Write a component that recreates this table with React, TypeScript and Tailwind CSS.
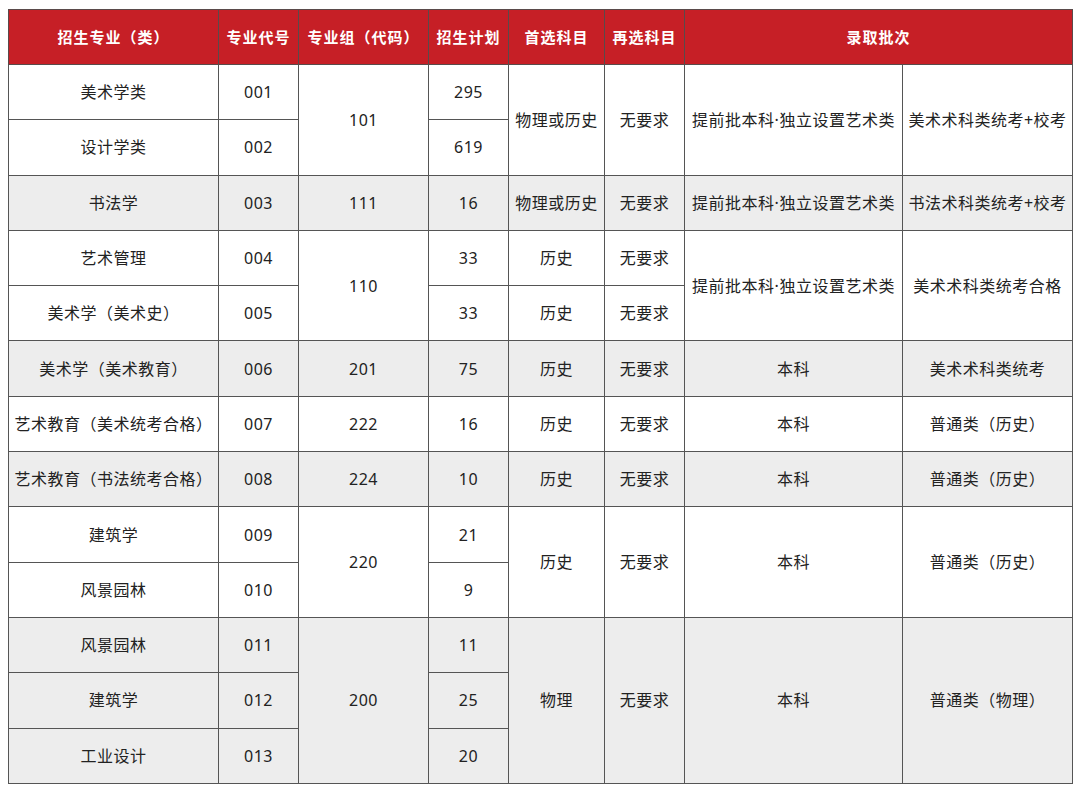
import React from 'react';

type Cell = { text: string; rowSpan?: number; colSpan?: number };

const headers = ['招生专业（类）', '专业代号', '专业组（代码）', '招生计划', '首选科目', '再选科目'];

// each row lists only the cells that start on it; rowSpan for merged cells
const rows: { gray: boolean; cells: Cell[] }[] = [
    {
        gray: false,
        cells: [
            { text: '美术学类' }, { text: '001' }, { text: '101', rowSpan: 2 }, { text: '295' },
            { text: '物理或历史', rowSpan: 2 }, { text: '无要求', rowSpan: 2 },
            { text: '提前批本科·独立设置艺术类', rowSpan: 2 }, { text: '美术术科类统考+校考', rowSpan: 2 },
        ],
    },
    { gray: false, cells: [{ text: '设计学类' }, { text: '002' }, { text: '619' }] },
    {
        gray: true,
        cells: [
            { text: '书法学' }, { text: '003' }, { text: '111' }, { text: '16' }, { text: '物理或历史' },
            { text: '无要求' }, { text: '提前批本科·独立设置艺术类' }, { text: '书法术科类统考+校考' },
        ],
    },
    {
        gray: false,
        cells: [
            { text: '艺术管理' }, { text: '004' }, { text: '110', rowSpan: 2 }, { text: '33' }, { text: '历史' },
            { text: '无要求' }, { text: '提前批本科·独立设置艺术类', rowSpan: 2 }, { text: '美术术科类统考合格', rowSpan: 2 },
        ],
    },
    { gray: false, cells: [{ text: '美术学（美术史）' }, { text: '005' }, { text: '33' }, { text: '历史' }, { text: '无要求' }] },
    {
        gray: true,
        cells: [
            { text: '美术学（美术教育）' }, { text: '006' }, { text: '201' }, { text: '75' }, { text: '历史' },
            { text: '无要求' }, { text: '本科' }, { text: '美术术科类统考' },
        ],
    },
    {
        gray: false,
        cells: [
            { text: '艺术教育（美术统考合格）' }, { text: '007' }, { text: '222' }, { text: '16' }, { text: '历史' },
            { text: '无要求' }, { text: '本科' }, { text: '普通类（历史）' },
        ],
    },
    {
        gray: true,
        cells: [
            { text: '艺术教育（书法统考合格）' }, { text: '008' }, { text: '224' }, { text: '10' }, { text: '历史' },
            { text: '无要求' }, { text: '本科' }, { text: '普通类（历史）' },
        ],
    },
    {
        gray: false,
        cells: [
            { text: '建筑学' }, { text: '009' }, { text: '220', rowSpan: 2 }, { text: '21' },
            { text: '历史', rowSpan: 2 }, { text: '无要求', rowSpan: 2 }, { text: '本科', rowSpan: 2 },
            { text: '普通类（历史）', rowSpan: 2 },
        ],
    },
    { gray: false, cells: [{ text: '风景园林' }, { text: '010' }, { text: '9' }] },
    {
        gray: true,
        cells: [
            { text: '风景园林' }, { text: '011' }, { text: '200', rowSpan: 3 }, { text: '11' },
            { text: '物理', rowSpan: 3 }, { text: '无要求', rowSpan: 3 }, { text: '本科', rowSpan: 3 },
            { text: '普通类（物理）', rowSpan: 3 },
        ],
    },
    { gray: true, cells: [{ text: '建筑学' }, { text: '012' }, { text: '25' }] },
    { gray: true, cells: [{ text: '工业设计' }, { text: '013' }, { text: '20' }] },
];

export default function App() {
    return (
        <div className="w-[1080px] h-[788px] bg-white pl-[8px] pt-[9px] font-['Noto_Sans','Noto_Sans_CJK_SC',sans-serif]">
            <table className="w-[1064px] table-fixed border-collapse">
                <colgroup>
                    <col className="w-[210px]" />
                    <col className="w-[80px]" />
                    <col className="w-[130px]" />
                    <col className="w-[80px]" />
                    <col className="w-[96px]" />
                    <col className="w-[80px]" />
                    <col className="w-[218px]" />
                    <col className="w-[170px]" />
                </colgroup>
                <thead>
                    <tr className="h-[55px] bg-[#c61f26]">
                        {headers.map((h) => (
                            <th
                                key={h}
                                className="border border-[#5a4a4a] text-[15px] font-bold tracking-[1px] text-white text-center whitespace-nowrap"
                            >
                                {h}
                            </th>
                        ))}
                        <th
                            colSpan={2}
                            className="border border-[#5a4a4a] text-[15px] font-bold tracking-[1px] text-white text-center"
                        >
                            录取批次
                        </th>
                    </tr>
                </thead>
                <tbody>
                    {rows.map((row, i) => (
                        <tr key={i} className={`h-[55.3px] ${row.gray ? 'bg-[#ededed]' : 'bg-white'}`}>
                            {row.cells.map((c, j) => (
                                <td
                                    key={j}
                                    rowSpan={c.rowSpan}
                                    className="border border-[#555555] text-[16px] tracking-[0.5px] text-[#222222] text-center whitespace-nowrap p-0"
                                >
                                    {c.text}
                                </td>
                            ))}
                        </tr>
                    ))}
                </tbody>
            </table>
        </div>
    );
}
